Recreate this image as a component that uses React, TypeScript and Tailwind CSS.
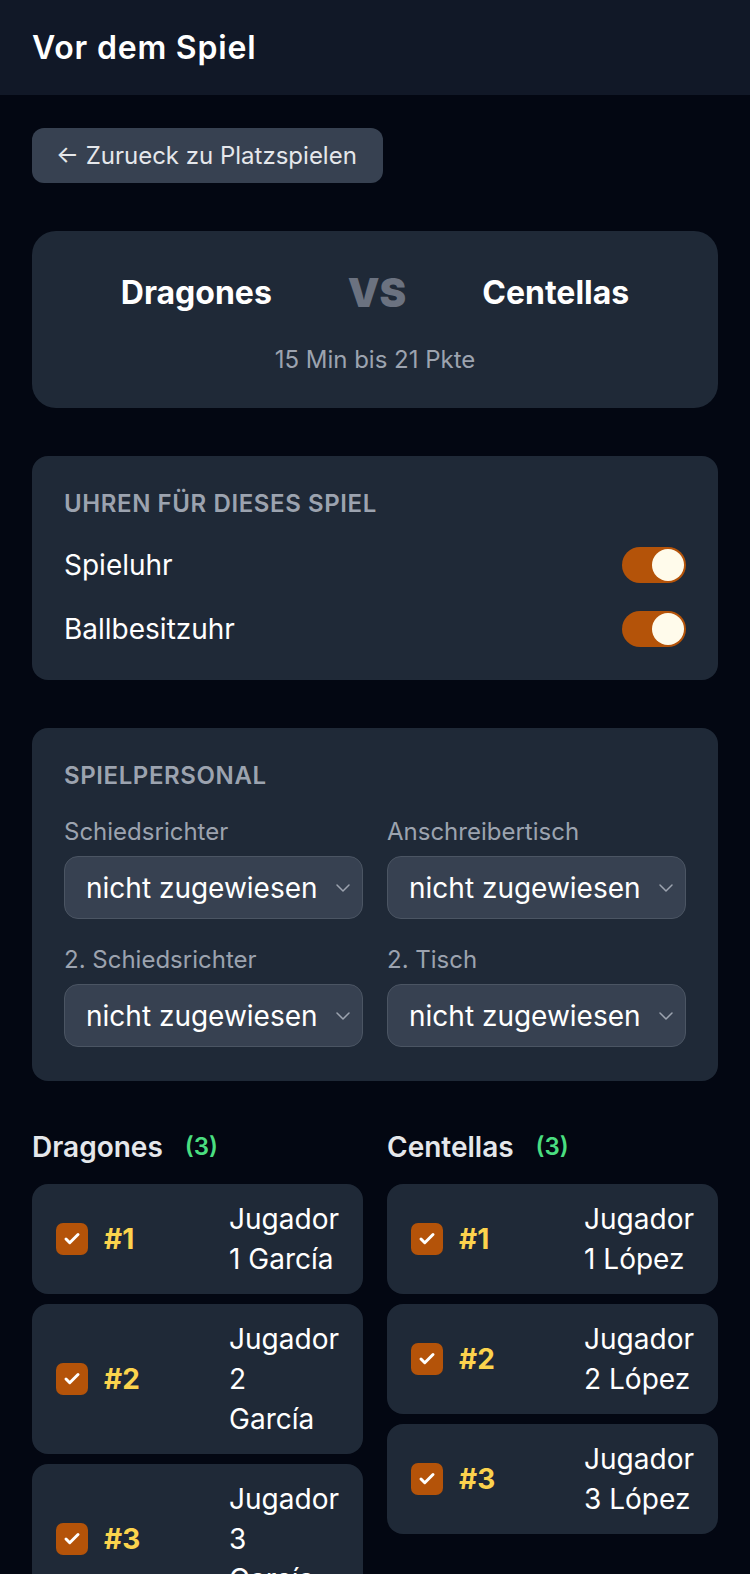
import { Check, ChevronDown } from 'lucide-react'

const staff = [
  { label: 'Schiedsrichter', value: 'nicht zugewiesen' },
  { label: 'Anschreibertisch', value: 'nicht zugewiesen' },
  { label: '2. Schiedsrichter', value: 'nicht zugewiesen' },
  { label: '2. Tisch', value: 'nicht zugewiesen' },
]

const teams = [
  {
    name: 'Dragones',
    players: [
      { no: 1, lines: ['Jugador', '1 García'] },
      { no: 2, lines: ['Jugador', '2', 'García'] },
      { no: 3, lines: ['Jugador', '3', 'García'] },
    ],
  },
  {
    name: 'Centellas',
    players: [
      { no: 1, lines: ['Jugador', '1 López'] },
      { no: 2, lines: ['Jugador', '2 López'] },
      { no: 3, lines: ['Jugador', '3 López'] },
    ],
  },
]

function Toggle() {
  return (
    <div className="w-[64px] h-[36px] rounded-full bg-[#b45309] flex items-center justify-end px-[2px]">
      <div className="w-[32px] h-[32px] rounded-full bg-[#fffbeb]" />
    </div>
  )
}

export default function App() {
  return (
    <div
      className="min-h-screen bg-[#030712] text-white"
      style={{ fontFamily: 'Inter, "Noto Sans", sans-serif' }}
    >
      <header className="h-[95px] bg-[#111827] px-8 flex items-center">
        <h1 className="text-[32px] font-semibold tracking-wide">Vor dem Spiel</h1>
      </header>

      <main className="px-8 pt-[33px] pb-8 flex flex-col gap-12">
        <div>
          <button className="h-[55px] pl-6 pr-[26px] rounded-[12px] bg-[#374151] text-[#e5e7eb] text-[24px] flex items-center">
            ← Zurueck zu Platzspielen
          </button>
        </div>

        <section className="rounded-[24px] bg-[#1f2937] pt-[38px] pb-[32px] flex flex-col items-center">
          <div className="flex items-center justify-center gap-[76px] h-[48px]">
            <span className="text-[32px] font-bold">Dragones</span>
            <span className="text-[40px] font-black text-[#6b7280]">VS</span>
            <span className="text-[32px] font-bold">Centellas</span>
          </div>
          <p className="mt-[27px] text-[24px] leading-[32px] text-[#9ca3af]">15 Min bis 21 Pkte</p>
        </section>

        <section className="rounded-[16px] bg-[#1f2937] px-8 pt-8 pb-[33px] flex flex-col gap-[28px]">
          <h2 className="text-[24px] leading-[31px] font-semibold uppercase tracking-wide text-[#9ca3af]">
            Uhren für dieses Spiel
          </h2>
          <div className="flex flex-col gap-[28px]">
            {['Spieluhr', 'Ballbesitzuhr'].map(label => (
              <div key={label} className="h-[36px] flex items-center justify-between">
                <span className="text-[28px]">{label}</span>
                <Toggle />
              </div>
            ))}
          </div>
        </section>

        <section className="rounded-[16px] bg-[#1f2937] px-8 pt-8 pb-[34px]">
          <h2 className="text-[24px] leading-[32px] font-semibold uppercase tracking-wide text-[#9ca3af]">
            Spielpersonal
          </h2>
          <div className="mt-6 grid grid-cols-2 gap-x-6 gap-y-[25px]">
            {staff.map(s => (
              <div key={s.label}>
                <div className="text-[24px] leading-[32px] text-[#9ca3af]">{s.label}</div>
                <div className="mt-2 h-[63px] rounded-[14px] bg-[#374151] border border-[#4b5563] flex items-center justify-between pl-[21px] pr-[7px]">
                  <span className="text-[28px] whitespace-nowrap">{s.value}</span>
                  <ChevronDown size={24} strokeWidth={1.5} className="text-[#9ca3af] shrink-0" />
                </div>
              </div>
            ))}
          </div>
        </section>

        <section className="grid grid-cols-2 gap-6">
          {teams.map(team => (
            <div key={team.name}>
              <div className="h-[36px] flex items-center mb-[19px]">
                <span className="text-[28px] font-semibold text-[#e5e7eb]">{team.name}</span>
                <span className="ml-[22px] text-[24px] font-semibold text-[#4ade80]">(3)</span>
              </div>
              <div className="flex flex-col gap-[10px]">
                {team.players.map(p => (
                  <div
                    key={p.no}
                    className="rounded-[16px] bg-[#1f2937] py-[15px] pl-6 pr-6 flex items-center"
                  >
                    <div className="w-[32px] h-[32px] rounded-[7px] bg-[#b45309] flex items-center justify-center">
                      <Check size={18} strokeWidth={4} className="text-white" />
                    </div>
                    <span className="ml-4 text-[28px] font-bold text-[#fcd34d]">#{p.no}</span>
                    <div className="ml-auto text-[28px] leading-[40px]">
                      {p.lines.map(l => (
                        <div key={l}>{l}</div>
                      ))}
                    </div>
                  </div>
                ))}
              </div>
            </div>
          ))}
        </section>
      </main>
    </div>
  )
}
